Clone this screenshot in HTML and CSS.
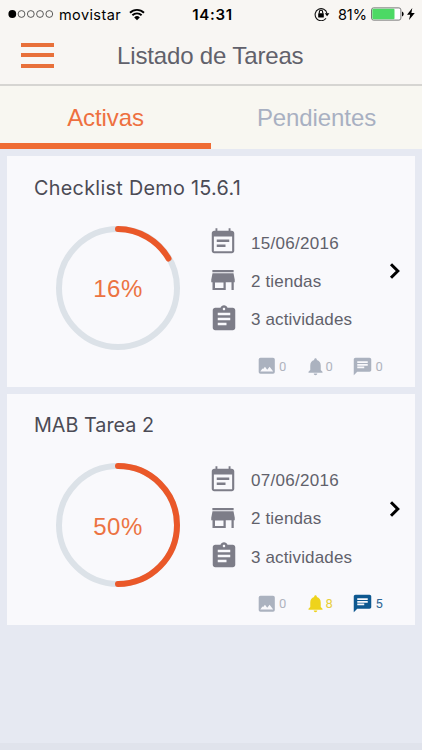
FILE: index.html
```
<!DOCTYPE html>
<html lang="es">
<head>
    <meta charset="UTF-8">
    <meta name="viewport" content="width=device-width, initial-scale=1.0">
    <title>Listado de Tareas</title>
    <link rel="stylesheet" href="styles.css">
</head>
<body>
    <!-- Shared icons -->
    <svg class="sprite" width="0" height="0">
        <symbol id="calendar" viewBox="0 0 24 24"><path d="M17 10H7v2h10v-2zm2-7h-1V1h-1.500v2h-9V1H6v2H5c-1.11 0-1.99.9-1.99 2L3 19c0 1.1.89 2 2 2h14c1.1 0 2-.9 2-2V5c0-1.1-.9-2-2-2zm.3 16.300H4.700V7.500h14.600v11.800zm-5.300-5.300H7v2h7v-2z"/></symbol>
        <symbol id="store" viewBox="0 0 24 24"><path d="M20.500 4h-17v1.800h17V4zm.9 9.800v-2l-1-5.200H3.600l-1 5.200v2h1V20h10.600v-6.200h4.600V20h1.800v-6.200h.8zm-9 4.600H5.600v-4.400h6.800v4.400z"/></symbol>
        <symbol id="assignment" viewBox="0 0 24 24"><path d="M19 3h-4.18C14.4 1.84 13.3 1 12 1c-1.3 0-2.4.84-2.82 2H5c-1.1 0-2 .9-2 2v14c0 1.1.9 2 2 2h14c1.1 0 2-.9 2-2V5c0-1.1-.9-2-2-2zm-7 0c.55 0 1 .45 1 1s-.45 1-1 1-1-.45-1-1 .45-1 1-1zm2 14H7v-2h7v2zm3-4H7v-2h10v2zm0-4H7V7h10v2z"/></symbol>
        <symbol id="image" viewBox="0 0 24 24"><path d="M5 3h14a2 2 0 0 1 2 2v14a2 2 0 0 1-2 2H5a2 2 0 0 1-2-2V5a2 2 0 0 1 2-2zM4.800 18.500h14.400l-4-5.500-2.700 3.400-2.500-3.400-2 2.600-.8-.6z" fill-rule="evenodd"/></symbol>
        <symbol id="bell" viewBox="0 0 24 24"><path d="M12 22c1.1 0 2-.9 2-2h-4c0 1.1.89 2 2 2zm6-6v-5c0-3.07-1.64-5.64-4.5-6.32V4c0-.83-.67-1.5-1.5-1.5s-1.5.67-1.5 1.5v.68C7.63 5.36 6 7.92 6 11v5l-2 2v1h16v-1l-2-2z"/></symbol>
        <symbol id="chat" viewBox="0 0 24 24"><path d="M20 2H4c-1.1 0-1.99.9-1.99 2L2 22l4-4h14c1.1 0 2-.9 2-2V4c0-1.1-.9-2-2-2zM6 9h12v2H6V9zm8 5H6v-2h8v2zm4-6H6V6h12v2z"/></symbol>
        <symbol id="chevron" viewBox="0 0 12 18"><path d="M2 2.200 8.800 9 2 15.800" fill="none" stroke="#000" stroke-width="3"/></symbol>
    </svg>

    <header>
        <div class="status-bar">
            <div class="carrier">
                <svg class="signal" width="46" height="10" viewBox="0 0 46 10">
                    <circle cx="4.300" cy="5" r="3.900"/>
                    <g fill="none" stroke="#333" stroke-width=".8">
                        <circle cx="13.500" cy="5" r="3.400"/>
                        <circle cx="22.800" cy="5" r="3.400"/>
                        <circle cx="32" cy="5" r="3.400"/>
                        <circle cx="41.300" cy="5" r="3.400"/>
                    </g>
                </svg>
                <span>movistar</span>
                <svg class="wifi" width="16" height="13" viewBox="0 0 16 13">
                    <path d="M1 4.700a10 10 0 0 1 14 0M3.400 7.200a6.600 6.600 0 0 1 9.200 0" fill="none" stroke="#000" stroke-width="1.900"/>
                    <path d="M8 12.300 5.200 9.400a4 4 0 0 1 5.600 0z"/>
                </svg>
            </div>
            <span class="time">14:31</span>
            <div class="power">
                <svg class="lock" width="16" height="14" viewBox="0 0 16 14">
                    <path d="M12 11.200A6 6 0 1 1 13 6.500" fill="none" stroke="#111" stroke-width="1.100"/>
                    <path d="M10.800 6.200h4.600l-2.300 3z"/>
                    <rect x="4.200" y="6.200" width="5.600" height="4.300" rx=".5"/>
                    <path d="M5.300 6.500V5a1.700 1.700 0 0 1 3.400 0v1.500" fill="none" stroke="#000" stroke-width="1.100"/>
                </svg>
                <span>81%</span>
                <svg class="battery" width="33" height="14" viewBox="0 0 33 14">
                    <rect x=".5" y=".9" width="29.400" height="12.200" rx="2" fill="#fff" stroke="#777"/>
                    <rect x="1.300" y="1.700" width="22.200" height="10.600" rx="1" fill="#4cd964"/>
                    <path d="M31 4.600c2.200.8 2.200 4 0 4.800z"/>
                </svg>
                <svg class="bolt" width="8" height="12" viewBox="0 0 8 12"><path d="M5.300 0 0 6.800h3.200L2 12l5.800-7H4.400z"/></svg>
            </div>
        </div>
        <div class="nav-bar">
            <div class="menu"><i></i><i></i><i></i></div>
            <h1>Listado de Tareas</h1>
        </div>
    </header>

    <nav class="tabs">
        <a class="active">Activas</a>
        <a>Pendientes</a>
    </nav>

    <main>
        <section class="card">
            <h2 class="wide">Checklist Demo 15.6.1</h2>
            <div class="card-body">
                <div class="progress">
                    <svg width="126" height="126" viewBox="0 0 126 126">
                        <circle class="track" cx="63" cy="63" r="59"/>
                        <path class="bar" d="M63 4A59 59 0 0 1 113.500 33.500"/>
                    </svg>
                    <span>16%</span>
                </div>
                <ul class="details">
                    <li class="date"><svg><use href="#calendar"/></svg>15/06/2016</li>
                    <li><svg><use href="#store"/></svg>2 tiendas</li>
                    <li class="activities"><svg><use href="#assignment"/></svg>3 actividades</li>
                </ul>
                <svg class="chevron"><use href="#chevron"/></svg>
            </div>
            <div class="counters">
                <span class="photos"><svg><use href="#image"/></svg>0</span>
                <span class="alerts"><svg><use href="#bell"/></svg>0</span>
                <span class="comments"><svg><use href="#chat"/></svg>0</span>
            </div>
        </section>

        <section class="card">
            <h2>MAB Tarea 2</h2>
            <div class="card-body">
                <div class="progress">
                    <svg width="126" height="126" viewBox="0 0 126 126">
                        <circle class="track" cx="63" cy="63" r="59"/>
                        <path class="bar" d="M63 4A59 59 0 0 1 63 122"/>
                    </svg>
                    <span>50%</span>
                </div>
                <ul class="details">
                    <li class="date"><svg><use href="#calendar"/></svg>07/06/2016</li>
                    <li><svg><use href="#store"/></svg>2 tiendas</li>
                    <li class="activities"><svg><use href="#assignment"/></svg>3 actividades</li>
                </ul>
                <svg class="chevron"><use href="#chevron"/></svg>
            </div>
            <div class="counters">
                <span class="photos"><svg><use href="#image"/></svg>0</span>
                <span class="alerts yellow"><svg><use href="#bell"/></svg>8</span>
                <span class="comments blue"><svg><use href="#chat"/></svg>5</span>
            </div>
        </section>
    </main>
    <footer></footer>
</body>
</html>
```
FILE: styles.css
```
* {
    box-sizing: border-box;
}
body {
    margin: 0;
    height: 750px;
    display: flex;
    flex-direction: column;
    overflow: hidden;
    background: #e6e9f2;
    color: #61616b;
    font-family: "Liberation Sans", Arial, sans-serif;
}
svg {
    display: block;
    flex: none;
}
.sprite {
    position: absolute;
}
header {
    height: 86px;
    background: #f8f6f3;
    border-bottom: 2px solid #d6d5d2;
}
.status-bar {
    height: 28px;
    display: grid;
    grid-template-columns: 1fr auto 1fr;
    align-items: center;
    padding: 0 7px 0 8px;
    color: #000;
    font: 14.5px Inter, sans-serif;
}
.carrier,
.power {
    display: flex;
    align-items: center;
}
.carrier span {
    margin: 0 8px 0 5px;
    letter-spacing: 0.4px;
}
.time {
    padding-left: 2px;
    font-weight: 600;
    font-size: 15px;
    letter-spacing: 0.7px;
}
.power {
    justify-content: flex-end;
}
.power span {
    margin: 0 4px 0 8px;
}
.bolt {
    margin-left: 3px;
}
.nav-bar {
    height: 56px;
    display: flex;
    align-items: center;
    padding-left: 21px;
}
.menu {
    width: 33px;
    height: 25px;
    display: flex;
    flex-direction: column;
    justify-content: space-between;
    margin-top: -2px;
}
.menu i {
    height: 4px;
    background: #e8703a;
}
h1 {
    margin: 0 0 0 63px;
    font-size: 24px;
    font-weight: normal;
    line-height: 28px;
    letter-spacing: -0.15px;
}
.tabs {
    height: 63px;
    display: flex;
    background: #f8f7f1;
}
.tabs a {
    flex: 1;
    border-bottom: 6px solid transparent;
    color: #a8b0c2;
    font-size: 24px;
    line-height: 63px;
    letter-spacing: -0.1px;
    text-align: center;
}
.tabs .active {
    color: #ee7040;
    border-color: #ef6c34;
}
main {
    flex: 1;
    display: flex;
    flex-direction: column;
    gap: 6.500px;
    padding: 7px 7px 0;
}
.card {
    height: 231px;
    background: #f9f9fc;
}
h2 {
    height: 68.500px;
    margin: 0;
    padding: 15.500px 27px 0;
    color: #4b4b55;
    font: 400 19.800px/32px Inter, sans-serif;
}
.wide {
    letter-spacing: 0.3px;
}
.card-body {
    height: 126px;
    display: flex;
    align-items: center;
    padding-left: 48px;
}
.progress {
    display: grid;
    place-items: center;
}
.progress > * {
    grid-area: 1 / 1;
}
.progress span {
    padding-top: 3px;
    color: #ec7342;
    font-size: 24px;
    letter-spacing: 0.5px;
}
.track,
.bar {
    fill: none;
    stroke: #dce2e8;
    stroke-width: 6;
}
.bar {
    stroke: #ea5829;
    stroke-linecap: round;
}
.details {
    width: 181px;
    margin: -11px 0 0 27px;
    padding: 0;
    list-style: none;
    font-size: 17px;
    letter-spacing: 0.15px;
}
.details li {
    height: 38.300px;
    display: flex;
    align-items: center;
    gap: 13px;
}
.details svg {
    width: 30px;
    height: 30px;
    margin-top: -3px;
    fill: #7d7d88;
}
.details .date {
    letter-spacing: 0.3px;
}
.details .activities {
    padding-left: 1px;
    gap: 12px;
}
.chevron {
    width: 12px;
    height: 18px;
    margin-top: -33px;
}
.counters {
    display: flex;
    align-items: center;
    height: 31px;
    padding-left: 248.500px;
    color: #b0b4be;
    font: 400 13px Roboto, sans-serif;
}
.counters span {
    display: flex;
    align-items: center;
    gap: 2px;
    fill: #abb2bf;
}
.counters svg {
    width: 21px;
    height: 21px;
}
.counters .photos {
    width: 49px;
}
.counters .photos svg {
    width: 21.500px;
    height: 21.500px;
}
.counters .alerts {
    width: 47px;
    gap: 0;
}
.counters .comments {
    gap: 3px;
}
.counters .yellow {
    color: #e8cf3c;
    fill: #eed31c;
}
.counters .blue {
    color: #2d6695;
    fill: #0d5890;
}
footer {
    height: 7px;
    background: #e0e3ec;
}
```
